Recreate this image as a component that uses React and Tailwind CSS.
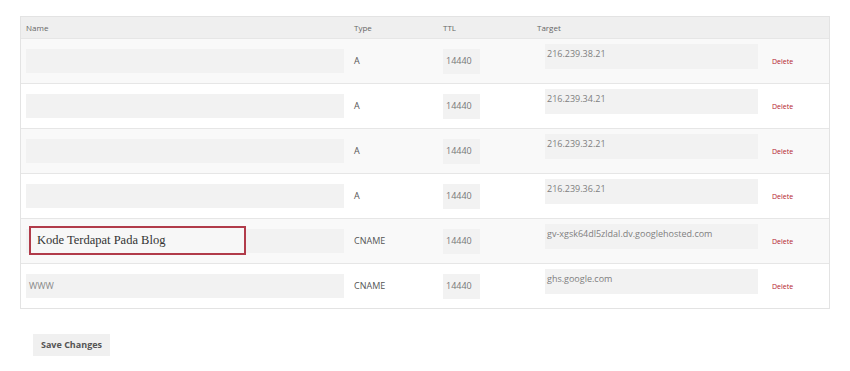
import React from 'react';

const ROWS = [
  { name: '', type: 'A', ttl: '14440', target: '216.239.38.21' },
  { name: '', type: 'A', ttl: '14440', target: '216.239.34.21' },
  { name: '', type: 'A', ttl: '14440', target: '216.239.32.21' },
  { name: '', type: 'A', ttl: '14440', target: '216.239.36.21' },
  { name: '', type: 'CNAME', ttl: '14440', target: 'gv-xgsk64dl5zldal.dv.googlehosted.com', note: 'Kode Terdapat Pada Blog' },
  { name: 'WWW', type: 'CNAME', ttl: '14440', target: 'ghs.google.com' },
];

export default function App() {
  return (
    <div className="w-[850px] h-[371px] bg-white pt-[16px] pl-[20px] font-['Open_Sans',sans-serif]">
      {/* DNS records table */}
      <div className="w-[810px] border border-[#e3e3e3]">
        <div className="flex h-[21px] items-center bg-[#efefef] text-[8px] text-[#666]">
          <div className="w-[327px] pl-[5px]">Name</div>
          <div className="w-[89px] pl-[6px]">Type</div>
          <div className="w-[94px] pl-[6px]">TTL</div>
          <div className="w-[234px] pl-[6px]">Target</div>
        </div>

        {ROWS.map((r, i) => (
          <div
            key={i}
            className={`flex h-[45px] items-center border-t border-[#e6e6e6] ${i % 2 === 0 ? 'bg-[#f9f9f9]' : 'bg-white'}`}
          >
            <div className="w-[327px] pl-[5px]">
              <div className="relative w-[318px] h-[24px] bg-[#f2f2f2] flex items-center pl-[3px] text-[9px] text-[#888]">
                {r.name}
                {r.note && (
                  <div className="absolute left-[3px] top-[-3px] w-[217px] h-[29px] border-2 border-[#b13b4a] bg-[#f7f7f7] flex items-center pl-[6px] text-[12.5px] text-[#333] font-['Liberation_Serif',serif]">
                    {r.note}
                  </div>
                )}
              </div>
            </div>
            <div className="w-[89px] pl-[6px] text-[9px] text-[#555]">{r.type}</div>
            <div className="w-[94px] pl-[6px]">
              <div className="w-[37px] h-[25px] bg-[#f2f2f2] flex items-center pl-[3px] text-[9px] text-[#777]">
                {r.ttl}
              </div>
            </div>
            <div className="w-[234px] self-start pt-[5px]">
              <div className="ml-[14px] w-[213px] h-[25px] bg-[#f2f2f2] pl-[2px] pt-[4px] text-[9px] leading-[12px] text-[#808080]">
                {r.target}
              </div>
            </div>
            <div className="pl-[7px] pt-[2px] text-[7px] text-[#b3222d]">Delete</div>
          </div>
        ))}
      </div>

      <button className="mt-[25px] ml-[13px] w-[77px] h-[22px] bg-[#f0f0f0] text-[9px] font-bold text-[#555]">
        Save Changes
      </button>
    </div>
  );
}
